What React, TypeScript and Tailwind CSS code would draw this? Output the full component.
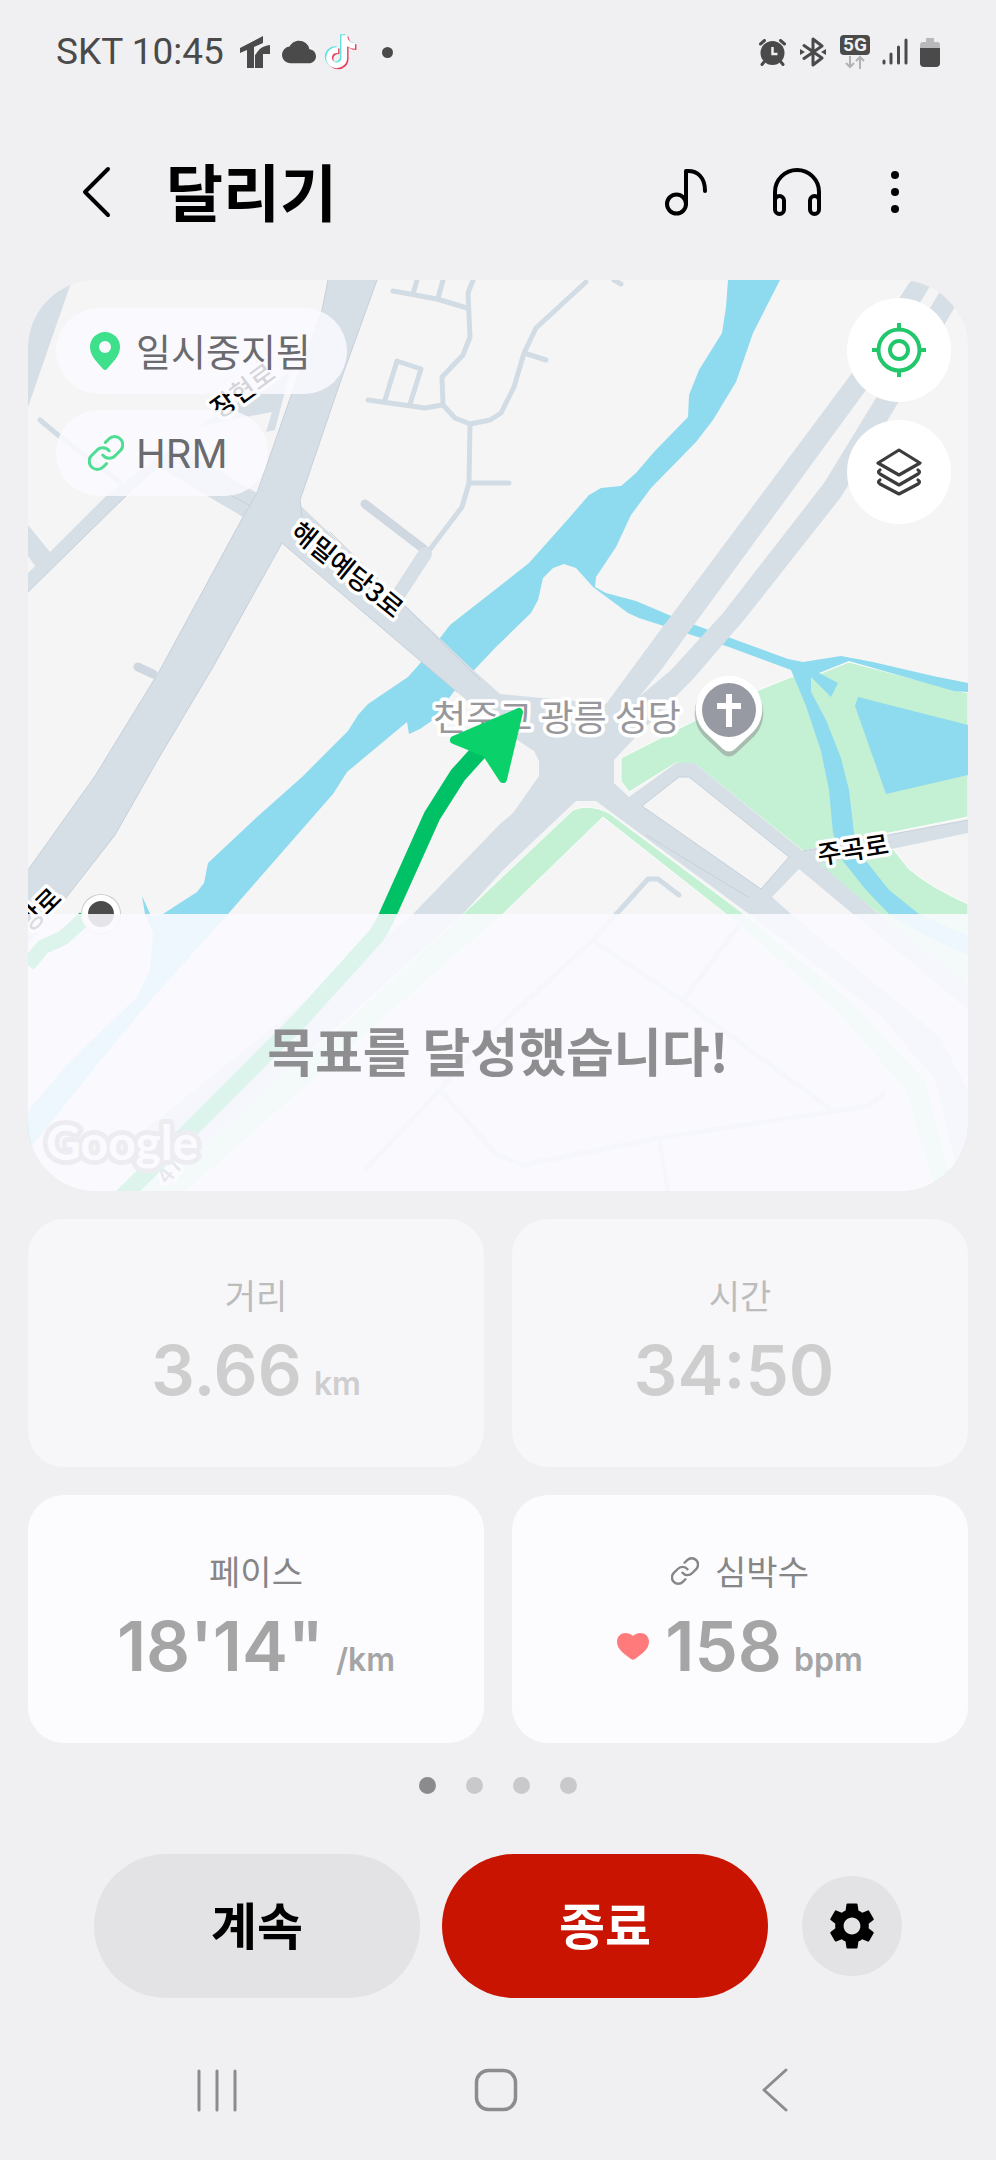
import React, { useState } from "react";
import { MdCloud, MdSettings } from "react-icons/md";
import clsx from "clsx";

const TIKTOK =
  "M448,209.91a210.06,210.06,0,0,1-122.77-39.25V349.38A162.55,162.55,0,1,1,185,188.31V278.2a74.62,74.62,0,1,0,52.23,71.18V0l88,0a121.18,121.18,0,0,0,1.86,22.17h0A122.18,122.18,0,0,0,381,102.39a121.43,121.43,0,0,0,67,20.14Z";

const LinkIcon = ({ className }: { className?: string }) => (
  <svg
    viewBox="2 2 20 20"
    fill="none"
    stroke="currentColor"
    strokeWidth="1.7"
    strokeLinecap="round"
    className={className}
  >
    <path d="M10.2 13.2a4.6 4.6 0 0 0 7 .2l2.8-2.8a4.5 4.5 0 0 0-6.4-6.4l-1.9 1.9" />
    <path d="M13.8 10.8a4.6 4.6 0 0 0-7-.2L4 13.4a4.5 4.5 0 0 0 6.4 6.4l1.9-1.9" />
  </svg>
);

const StatusBar = () => (
  <div className="flex h-26 items-center justify-between px-14 text-[#4a4a4a]">
    <div className="flex items-center">
      <span className="mr-4 font-['Roboto',sans-serif] text-[37px] leading-10">SKT 10:45</span>
      <svg viewBox="0 0 30 32" className="mr-3 h-8 w-[30px]" fill="currentColor">
        <path d="M0 12 23 0v7l-9 4v21H7V14l-7 3z" />
        <path d="M16 18c3-5 6-8 14-9v9h-7v14h-8V19z" />
      </svg>
      <MdCloud className="mr-2 size-[34px]" />
      <svg viewBox="-30 -20 520 560" className="mr-6 h-9 w-[34px]">
        <path d={TIKTOK} fill="#5ee3e0" transform="translate(-22 -16)" />
        <path d={TIKTOK} fill="#e8405f" transform="translate(22 18)" />
        <path d={TIKTOK} fill="#fff" />
      </svg>
      <span className="size-[11px] rounded-full bg-[#4a4a4a]" />
    </div>
    <div className="flex items-center">
      <svg viewBox="0 0 27 27" className="mr-3.5 size-[27px]">
        <circle cx="13.5" cy="14" r="12" fill="currentColor" />
        <path
          d="m1.5 5 4-3.5M25.5 5l-4-3.5M5 23l-2 2.5M22 23l2 2.5"
          stroke="currentColor"
          strokeWidth="3"
          strokeLinecap="round"
        />
        <path d="M13.5 8v7h5" fill="none" stroke="#f0f0f2" strokeWidth="2.5" />
      </svg>
      <svg viewBox="0 0 26 30" className="mr-3.5 h-[30px] w-[26px]" fill="none" stroke="currentColor">
        <path d="m4 8.5 18 12.5-9 7V2l9 7L4 21.5" strokeWidth="3" strokeLinecap="round" strokeLinejoin="round" />
        <path d="M0 12l5 3-5 3zM26 12l-5 3 5 3z" fill="currentColor" stroke="none" />
      </svg>
      <div className="mr-3 flex flex-col items-center">
        <span className="flex h-5 w-[30px] items-center justify-center rounded-sm bg-[#4a4a4a] font-['Roboto',sans-serif] text-[19px] leading-5 font-bold text-[#f0f0f2]">
          5G
        </span>
        <svg viewBox="0 0 20 14" className="h-3.5 w-5" fill="none" stroke="#b2b2b4" strokeWidth="2">
          <path d="M5 1v11M1 8l4 4 4-4M15 14V2M11 6l4-4 4 4" />
        </svg>
      </div>
      <svg viewBox="0 0 26 28" className="mr-3 h-7 w-[26px]" stroke="currentColor" strokeWidth="3" strokeLinecap="round">
        <path d="M2 23v2M9 16v9M16.5 9v16M24 2v23" />
      </svg>
      <svg viewBox="0 0 20 29" className="h-[29px] w-5">
        <path d="M6 0h8v4h3q3 0 3 3v4H0V7q0-3 3-3h3z" fill="#b9b9bb" />
        <path d="M0 10h20v15q0 4-4 4H4q-4 0-4-4z" fill="currentColor" />
      </svg>
    </div>
  </div>
);

const Header = () => (
  <header className="flex h-44 items-center pr-[85px] pl-[72px] text-black">
    <button aria-label="뒤로" className="mr-[46px]">
      <svg
        viewBox="0 0 48 52"
        className="h-[52px] w-12"
        fill="none"
        stroke="currentColor"
        strokeWidth="4"
        strokeLinecap="round"
        strokeLinejoin="round"
      >
        <path d="M36 3 13 26l23 23" />
      </svg>
    </button>
    <h1 className="grow pb-1 text-[62px] leading-[72px] font-bold">달리기</h1>
    <button aria-label="음악" className="mr-16">
      <svg
        viewBox="0 0 44 52"
        className="h-[52px] w-11"
        fill="none"
        stroke="currentColor"
        strokeWidth="4"
        strokeLinecap="round"
      >
        <circle cx="12.5" cy="38" r="9.5" />
        <path d="M22 38V5c12-1 19 7 19 20" strokeLinejoin="round" />
      </svg>
    </button>
    <button aria-label="오디오" className="mr-[57px]">
      <svg viewBox="0 0 50 52" className="h-[52px] w-[50px]" fill="none" stroke="currentColor" strokeWidth="4">
        <path d="M3 34V26a22 22 0 0 1 44 0v8" />
        <rect x="3" y="30" width="9" height="18" rx="4.5" />
        <rect x="38" y="30" width="9" height="18" rx="4.5" />
      </svg>
    </button>
    <button aria-label="더보기" className="flex w-8 flex-col items-center gap-[9px]">
      <span className="size-2 rounded-full bg-black" />
      <span className="size-2 rounded-full bg-black" />
      <span className="size-2 rounded-full bg-black" />
    </button>
  </header>
);

const MapDrawing = () => (
  <svg
    viewBox="28 280 940 911"
    preserveAspectRatio="xMidYMid slice"
    className="absolute inset-0 size-full"
    fontFamily="'Noto Sans CJK KR', sans-serif"
  >
    <rect x="28" y="280" width="940" height="911" fill="#f5f5f5" />

    {/* parks */}
    <g fill="#c4f0d4" stroke="#fbfdfb" strokeWidth="1">
      <path d="M621 758 696 720 759 690 791 677 819 674 849 662 968 693V817L889 833 803 851 696 765 676 763 629 792 621 781Z" />
      <path d="M816 863 893 849 909 869Q930 887 968 904V1000L879 914Z" />
      <path d="M573 810Q589 803 609 813L744 914 850 1000 925 1080 955 1191H935L905 1090 835 1010 726 914 603 817 503 914 187 1191H120L333 1034 463 914Z" />
    </g>

    {/* river and pond */}
    <g fill="#8edaee">
      <path d="M728 280 726 307 722 333 699 370 689 395 688 417 654 452 636 473 621 486 601 488 589 495 569 518 553 536 529 563 496 589 450 625 423 660 408 677 368 704 358 715 348 731 302 777 257 817 208 863 204 883 197 892 163 914 151 916 142 896 145 914 153 933 150 970 137 997 87 1045 63 1069 28 1111V1151L100 1061 150 1001 228 914 333 794 347 772 407 722 409 734 420 729 433 720 455 690 496 647 531 613 538 600 543 578 553 568 564 564 576 568 593 587 628 613 639 618 729 647 791 670 806 706 821 751 829 790 833 833 843 861 866 890 889 914 929 937 968 955V936L919 914 889 890 866 861 854 833 849 790 841 758 826 720 811 692 811 677 831 697 838 683 819 673 849 661 954 691 968 692V683L933 676 873 662 841 656 803 662 788 659 676 618 636 601 606 593 595 587 596 577 616 547 631 515 651 488 696 442 713 420 736 382 753 333 780 280Z" />
      <path d="M858 697 855 706 886 794 968 775V725Z" />
    </g>

    {/* main roads */}
    <g fill="#d7dfe6">
      <path d="M328 280 322 310 293 390 257 493 243 517 160 670 95 776 28 870V945L65 899 115 835 157 761 213 667 282 543 302 517 300 500 342 377 377 280Z" />
      <path d="M28 573 50 552 107 495 213 417 290 372 275 430 180 450 130 492 28 592ZM28 525 50 552 38 570 28 556Z" />
      <path d="M150 462 180 448 257 493 243 517Z" />
      <path d="M46 280H72L28 407V335Z" />
      <path d="M300 505 407 607 470 667 500 694 606 704 653 640 852 373 909 283 916 278 934 280 866 390 661 670 639 697 671 670 723 613 824 483 876 398 945 283 962 295 898 403 841 497 744 620 693 679 629 744 614 760V783L629 797 676 763H694L803 851 968 820V833L820 864 879 914 968 985V1010L853 914 749 914 596 801H576L503 870 463 914 200 1150H120L413 914 500 824 513 813 539 776V761L534 751 496 726 457 692 282 543Z" />
      <path d="M749 914H853L900 960 968 1090V1191H962L935 1080 880 1015Z" />
    </g>
    <g fill="#f5f5f5">
      <path d="M642 806 679 777H689L789 857 761 889Z" />
      <path d="M799 869 853 914 968 1010V1060L791 914 772 897Z" />
      <path d="M250 486 160 440 205 425 272 412Z" />
    </g>
    <g fill="none" stroke="#c6d0da" strokeWidth="1">
      <path d="M328 280 322 310 293 390 257 493 243 517 160 670 95 776 28 870M377 280 342 377 300 500 302 517M282 543 213 667 157 761 115 835 65 899" />
      <path d="M282 543 457 692M330 532 480 680M642 806 679 777H689L789 857 761 889ZM646 835 748 897M803 851 968 820M230 495 251 506M28 592 130 492" />
    </g>

    {/* side streets */}
    <g fill="none" stroke="#d2dce5" strokeWidth="5" strokeLinecap="round" strokeLinejoin="round">
      <path d="M393 291 437 299 467 308M417 280 413 294M443 280 438 298" />
      <path d="M473 280 468 293 470 337 463 355 442 377 443 405 455 418 470 424 490 420 501 413 514 387 524 353 536 328 586 282M524 353 546 360M614 280 621 284" />
      <path d="M368 400 425 408 442 405M385 400 397 361 421 369 410 404" />
      <path d="M470 424 469 483 462 507 428 552M469 483H509M40 420 58 435 120 482" />
      <path d="M679 895 658 879H648L593 940 496 1029 367 1168M593 940 683 1001 829 1108M743 920 684 999" />
      <path d="M884 1093 869 1106 659 1138 523 1165 496 1154 440 1090M659 1138 668 1191" />
      <path d="M365 504 425 550M138 667 153 674" strokeWidth="9" stroke="#cfd8e0" />
      <path d="M425 554 397 597" strokeWidth="14" stroke="#d7dfe6" />
    </g>

    {/* place and street names */}
    <g
      stroke="#fff"
      strokeWidth="7"
      strokeLinejoin="round"
      paintOrder="stroke"
      textAnchor="middle"
      fontSize="26"
      fontWeight="500"
    >
      <text x="243" y="400" transform="rotate(-36 243 391)">장현로</text>
      <text x="347" y="579" transform="rotate(39 347 570)">해밀예당3로</text>
      <text x="853" y="859" transform="rotate(-9 853 850)">주곡로</text>
      <text x="40" y="919" transform="rotate(-45 40 910)">앙로</text>
      <text x="170" y="1178" transform="rotate(-52 170 1170)" fontSize="24" fill="#666">47</text>
      <text x="557" y="731" fontSize="36" fontWeight="400" fill="#98989c">천주교 광릉 성당</text>
    </g>

    {/* church pin */}
    <path
      d="M729 678a33 33 0 0 1 24 56l-18 17q-6 5-12 0l-18-17a33 33 0 0 1 24-56Z"
      fill="#8b8b8e"
      stroke="#8b8b8e"
      strokeWidth="2"
      opacity=".5"
      transform="translate(0 2)"
    />
    <path d="M729 676a33 33 0 0 1 24 56l-18 17q-6 5-12 0l-18-17a33 33 0 0 1 24-56Z" fill="#fff" />
    <circle cx="729" cy="710" r="27" fill="#989aa3" />
    <path d="M729 694v33M717 706h24" stroke="#fff" strokeWidth="6" />

    {/* recorded route */}
    <path
      d="M122 1197 187 1133 300 1020 375 937Q382 928 388 914L432 816 458 775 486 744"
      fill="none"
      stroke="#00c166"
      strokeWidth="17"
    />
    <path d="M85 918 63 938 43 947 28 965" fill="none" stroke="#00c166" strokeWidth="15" />
    <path
      d="m519 712-16 67-17-26-32-13Z"
      fill="#0bd16a"
      stroke="#0bd16a"
      strokeWidth="8"
      strokeLinejoin="round"
    />
    <circle cx="101" cy="914" r="20" fill="#ccc" />
    <circle cx="101" cy="914" r="16" fill="#4b4b4b" stroke="#fff" strokeWidth="6" />

    <text
      x="46"
      y="1160"
      fontFamily="Lato, sans-serif"
      fontSize="48"
      fontWeight="700"
      fill="#fff"
      stroke="#8a8a8a"
      strokeWidth="10"
      strokeLinejoin="round"
      paintOrder="stroke"
    >
      Google
    </text>
  </svg>
);

const MapCard = () => (
  <section className="relative flex aspect-[940/911] flex-col justify-between overflow-hidden rounded-[68px]">
    <MapDrawing />
    <div className="relative flex items-start justify-between pt-[18px] pr-[17px] pl-7">
      <div className="flex flex-col items-start gap-4 pt-2.5 text-[38px] leading-[84px] text-[#6b6b6f]">
        <div className="flex items-center gap-4 rounded-full bg-[#fafaff]/85 pr-9 pl-[34px]">
          <svg viewBox="0 0 30 38" className="h-[38px] w-[30px]">
            <path
              d="M15 0A15 15 0 0 1 30 15.5C30 24 22 31 17 37q-2 2-4 0C8 31 0 24 0 15.5A15 15 0 0 1 15 0Zm0 9a6 6 0 1 0 0 12 6 6 0 0 0 0-12Z"
              fill="#3fe08c"
            />
          </svg>
          <span className="pb-0.5">일시중지됨</span>
        </div>
        <div className="flex items-center gap-3 rounded-full bg-[#fafaff]/85 pr-10 pl-8">
          <LinkIcon className="size-9 text-[#4fdc93]" />
          <span className="pt-0.5 font-['Inter',sans-serif] text-[40px]">HRM</span>
        </div>
      </div>
      <div className="flex flex-col gap-[18px]">
        <button aria-label="현재 위치" className="flex size-26 items-center justify-center rounded-full bg-white">
          <svg viewBox="0 0 54 54" className="size-[54px]" fill="none" stroke="#22c76c" strokeWidth="4">
            <circle cx="27" cy="27" r="20.5" />
            <circle cx="27" cy="27" r="9" />
            <path d="M27 0v7M27 47v7M0 27h7M47 27h7" />
          </svg>
        </button>
        <button aria-label="지도 레이어" className="flex size-26 items-center justify-center rounded-full bg-white">
          <svg
            viewBox="0 0 46 48"
            className="h-12 w-[46px]"
            fill="none"
            stroke="#3c3c3c"
            strokeWidth="3.2"
            strokeLinecap="round"
            strokeLinejoin="round"
          >
            <path d="m23 2 21 13-21 12L2 15Z" />
            <path d="M4 22q-3 2 0 4l19 11 19-11q3-2 0-4" />
            <path d="M4 32q-3 2 0 4l19 10 19-10q3-2 0-4" />
          </svg>
        </button>
      </div>
    </div>
    <div className="relative flex h-[277px] items-center justify-center bg-[#fafaff]/88 pb-1.5">
      <p className="text-[52px] leading-[60px] font-bold text-[#8e8e91]">목표를 달성했습니다!</p>
    </div>
  </section>
);

type Stat = {
  label: string;
  value: string;
  unit?: string;
  faded?: boolean;
  heart?: boolean;
};

const stats: Stat[] = [
  { label: "거리", value: "3.66", unit: "km", faded: true },
  { label: "시간", value: "34:50", faded: true },
  { label: "페이스", value: "18'14\"", unit: "/km" },
  { label: "심박수", value: "158", unit: "bpm", heart: true },
];

const StatCard = ({ label, value, unit, faded, heart }: Stat) => (
  <div
    className={clsx(
      "flex flex-col items-center rounded-[36px] pt-14 pb-[57px]",
      faded ? "bg-[#f7f7f9] text-[#cecece]" : "bg-[#fcfcfe] text-[#a5a5a6]"
    )}
  >
    <div
      className={clsx(
        "flex items-center gap-4 text-[34px] leading-10",
        faded ? "text-[#bcbcbd]" : "text-[#868687]"
      )}
    >
      {heart && <LinkIcon className="size-7" />}
      <span>{label}</span>
    </div>
    <div className="mt-[15px] flex items-center gap-4 font-['Inter',sans-serif] font-semibold">
      {heart && (
        <svg viewBox="0 0 32 27" className="h-[27px] w-8">
          <path d="M16 3C11-2 0-1 0 9c0 8 9 13 14 17q2 1.5 4 0c5-4 14-9 14-17C32-1 21-2 16 3Z" fill="#ff7b7b" />
        </svg>
      )}
      <div className="flex items-baseline gap-3">
        <span className="text-[69px] leading-20">{value}</span>
        <span className="text-[32px] leading-10">{unit}</span>
      </div>
    </div>
  </div>
);

const NavBar = () => (
  <nav className="grid grid-cols-3 pt-[70px] pr-[82px] pb-12 pl-[78px] text-[#8c8c8e]">
    <button aria-label="최근 앱" className="flex justify-center">
      <svg viewBox="0 0 44 44" className="size-11" stroke="currentColor" strokeWidth="3" strokeLinecap="round">
        <path d="M4 3v39M22 3v39M40 3v39" />
      </svg>
    </button>
    <button aria-label="홈" className="flex justify-center">
      <svg viewBox="0 0 44 44" className="size-11" fill="none" stroke="currentColor" strokeWidth="3.5">
        <rect x="2.5" y="2.5" width="39" height="39" rx="12" />
      </svg>
    </button>
    <button aria-label="뒤로 가기" className="flex justify-center">
      <svg
        viewBox="0 0 44 44"
        className="size-11"
        fill="none"
        stroke="currentColor"
        strokeWidth="3"
        strokeLinecap="round"
        strokeLinejoin="round"
      >
        <path d="M33 2 11 22l22 20" />
      </svg>
    </button>
  </nav>
);

export default function App() {
  const [page, setPage] = useState(0);

  return (
    <div className="min-h-screen bg-[#f0f0f2] font-['Noto_Sans_CJK_KR',sans-serif]">
      <StatusBar />
      <Header />
      <main>
        <div className="flex flex-col gap-7 px-7">
          <MapCard />
          <div className="grid grid-cols-2 gap-7">
            {stats.map((stat) => (
              <StatCard key={stat.label} {...stat} />
            ))}
          </div>
        </div>
        <div className="mt-[34px] flex justify-center gap-[30px]">
          {[0, 1, 2, 3].map((i) => (
            <button
              key={i}
              aria-label={`${i + 1} 페이지`}
              onClick={() => setPage(i)}
              className={clsx("size-[17px] rounded-full", i === page ? "bg-[#8b8b8d]" : "bg-[#c9c9cb]")}
            />
          ))}
        </div>
        <div className="mt-15 flex items-center px-[94px] text-[50px] leading-[138px] font-bold">
          <button className="mr-[22px] grow basis-0 rounded-full bg-[#e3e3e5] pb-1.5 text-black">계속</button>
          <button className="mr-[34px] grow basis-0 rounded-full bg-[#c81400] pb-1.5 text-white">종료</button>
          <button
            aria-label="설정"
            className="flex size-25 items-center justify-center rounded-full bg-[#e3e3e5] text-black"
          >
            <MdSettings className="size-14" />
          </button>
        </div>
      </main>
      <NavBar />
    </div>
  );
}
